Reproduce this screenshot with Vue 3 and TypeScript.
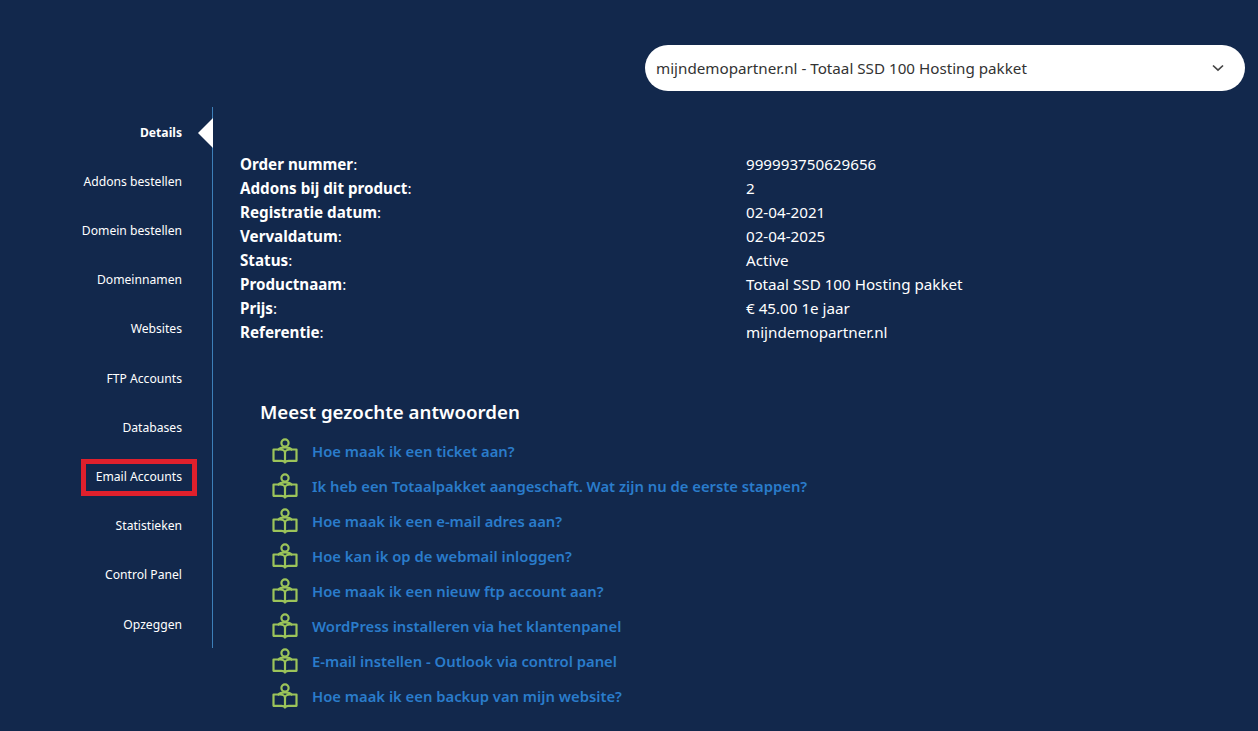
<script setup lang="ts">
const menu = [
  'Details',
  'Addons bestellen',
  'Domein bestellen',
  'Domeinnamen',
  'Websites',
  'FTP Accounts',
  'Databases',
  'Email Accounts',
  'Statistieken',
  'Control Panel',
  'Opzeggen'
]

const details = [
  ['Order nummer', '999993750629656'],
  ['Addons bij dit product', '2'],
  ['Registratie datum', '02-04-2021'],
  ['Vervaldatum', '02-04-2025'],
  ['Status', 'Active'],
  ['Productnaam', 'Totaal SSD 100 Hosting pakket'],
  ['Prijs', '€ 45.00 1e jaar'],
  ['Referentie', 'mijndemopartner.nl']
]

const answers = [
  'Hoe maak ik een ticket aan?',
  'Ik heb een Totaalpakket aangeschaft. Wat zijn nu de eerste stappen?',
  'Hoe maak ik een e-mail adres aan?',
  'Hoe kan ik op de webmail inloggen?',
  'Hoe maak ik een nieuw ftp account aan?',
  'WordPress installeren via het klantenpanel',
  'E-mail instellen - Outlook via control panel',
  'Hoe maak ik een backup van mijn website?'
]
</script>

<template>
  <div class="page">
    <div class="top">
      <div class="select">
        <span>mijndemopartner.nl - Totaal SSD 100 Hosting pakket</span>
        <svg width="12" height="8" viewBox="0 0 12 8">
          <path d="M1 1.5 L6 6.2 L11 1.5" fill="none" stroke="#444" stroke-width="1.7" />
        </svg>
      </div>
    </div>

    <div class="main">
      <ul class="menu">
        <li v-for="(item, i) in menu" :key="item" :class="{ active: i === 0 }">
          <span :class="{ marked: item === 'Email Accounts' }">{{ item }}</span>
        </li>
      </ul>

      <div class="content">
        <div class="details">
          <template v-for="row in details" :key="row[0]">
            <div class="label"><b>{{ row[0] }}</b>:</div>
            <div>{{ row[1] }}</div>
          </template>
        </div>

        <div class="answers">
          <h3>Meest gezochte antwoorden</h3>
          <a v-for="a in answers" :key="a" class="answer">
            <svg width="26" height="26" viewBox="0 0 26 26" fill="none" stroke="#9cc45a" stroke-width="2.2" stroke-linejoin="round" stroke-linecap="round">
              <circle cx="13" cy="5" r="3.6" />
              <path d="M6.5 11.5 C7.5 10 10 9.3 13 9.3 C16 9.3 18.5 10 19.5 11.5" />
              <path d="M13 15 C13 12.8 10.5 11.5 8 11.5 H1.5 V22.8 H9.5 C11 22.8 12.4 23.4 13 24.6 C13.6 23.4 15 22.8 16.5 22.8 H24.5 V11.5 H18 C15.5 11.5 13 12.8 13 15 V24.6" />
            </svg>
            <span>{{ a }}</span>
          </a>
        </div>
      </div>
    </div>
  </div>
</template>

<style>
html,
body {
  margin: 0;
  background: #12284c;
}
</style>

<style scoped>
.page {
  height: 731px;
  overflow: hidden;
  box-sizing: border-box;
  padding-top: 45px;
  background: #12284c;
  color: #fff;
  font-family: "Noto Sans", "Open Sans", sans-serif;
}

.top {
  display: flex;
  justify-content: flex-end;
  padding-right: 13px;
}

.select {
  width: 600px;
  height: 46px;
  box-sizing: border-box;
  padding: 0 21px 0 11px;
  display: flex;
  align-items: center;
  justify-content: space-between;
  background: #fff;
  border-radius: 23px;
  color: #333;
  font-size: 15.2px;
}

.main {
  display: flex;
  margin-top: 16px;
}

.menu {
  width: 213px;
  height: 541px;
  margin: 0;
  padding: 13.7px 30px 11.3px 0;
  box-sizing: border-box;
  list-style: none;
  border-right: 1px solid #3d7fb8;
  display: flex;
  flex-direction: column;
  justify-content: space-between;
  font-size: 12.15px;
}

.menu li {
  position: relative;
  text-align: right;
  line-height: 24px;
}

.menu li.active {
  font-weight: 700;
}

.menu li.active::after {
  content: "";
  position: absolute;
  right: -31px;
  top: -3px;
  border-style: solid;
  border-width: 15px 15px 15px 0;
  border-color: transparent #fff transparent transparent;
}

.marked {
  position: relative;
}

.marked::before {
  content: "";
  position: absolute;
  left: -15px;
  right: -15px;
  top: -9px;
  bottom: -11px;
  border: 5px solid #e0202c;
}

.content {
  padding: 45px 0 0 27px;
  flex: 1;
}

.details {
  display: grid;
  grid-template-columns: 506px 1fr;
  font-size: 15.2px;
  line-height: 24px;
}

.label b {
  font-weight: 700;
}

.answers {
  margin: 55px 0 0 20px;
}

.answers h3 {
  margin: 0 0 8px;
  font-size: 18.7px;
  line-height: 26px;
  font-weight: 600;
}

.answer {
  display: flex;
  align-items: center;
  height: 35px;
  padding-left: 12px;
  gap: 14px;
  color: #2a7ccb;
  font-size: 14.8px;
  font-weight: 600;
}
</style>
